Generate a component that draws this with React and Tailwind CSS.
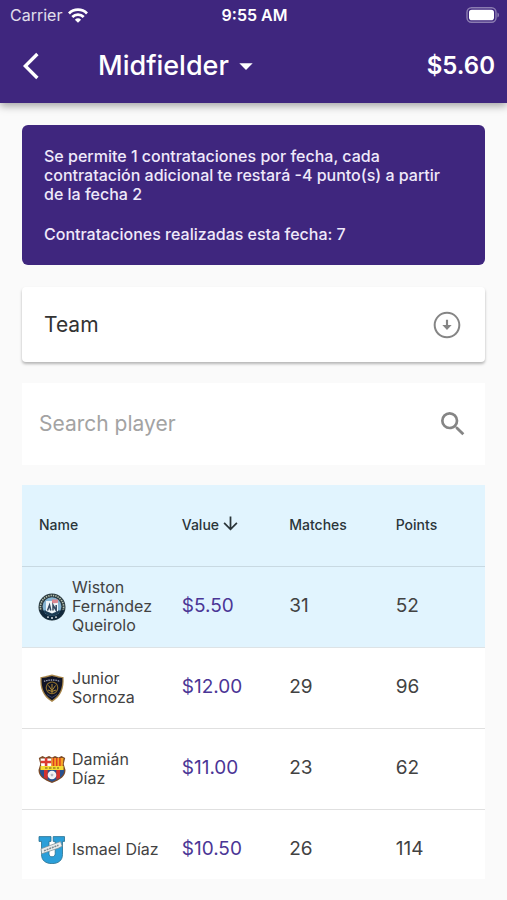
import React from "react";

function MaterialIcon({ d, className }) {
  return (
    <svg viewBox="0 0 24 24" fill="currentColor" aria-hidden="true" className={className}>
      <path d={d} />
    </svg>
  );
}

const ICONS = {
  back: "M11.67 3.87 9.9 2.1 0 12l9.9 9.9 1.77-1.77L3.54 12z",
  caret: "M7 10l5 5 5-5z",
  circleDown:
    "M12 3.500a8.500 8.500 0 1 1 0 17 8.500 8.500 0 0 1 0-17m0-1.500C6.480 2 2 6.480 2 12s4.480 10 10 10 10-4.480 10-10S17.520 2 12 2zm.8 10V8h-1.600v4H8.500l3.500 3.800 3.500-3.800z",
  search:
    "M15.5 14h-.79l-.28-.27A6.47 6.47 0 0 0 16 9.5 6.5 6.5 0 1 0 9.5 16c1.61 0 3.09-.59 4.23-1.57l.27.28v.79l5 4.99L20.49 19l-4.99-5zm-6 0A4.5 4.5 0 1 1 9.5 5a4.5 4.5 0 0 1 0 9z",
  down: "M20 12l-1.41-1.41L13 16.17V4h-2v12.17l-5.58-5.59L4 12l8 8 8-8z",
};

function StatusBar() {
  return (
    <div className="grid h-[30px] grid-cols-3 items-center pr-2 pl-[10px]">
      <div className="flex items-center gap-[6px] text-base text-white/85">
        <span>Carrier</span>
        <svg viewBox="0 0 20 15" className="h-[15px] w-5" fill="none" stroke="#fff" strokeWidth="2.8" aria-hidden="true">
          <path d="M1 5.4a12.8 12.8 0 0 1 18 0" />
          <path d="M4.3 9a8.1 8.1 0 0 1 11.4 0" />
          <path d="M10 14.8 6.9 11.7a4.5 4.5 0 0 1 6.2 0z" fill="#fff" stroke="none" />
        </svg>
      </div>
      <div className="text-center text-base font-semibold">9:55 AM</div>
      <svg viewBox="0 0 33 16" className="h-4 w-[33px] justify-self-end" aria-hidden="true">
        <rect x="1" y="0.75" width="29" height="14.5" rx="4.5" fill="none" stroke="#fff" strokeOpacity=".4" strokeWidth="1.4" />
        <rect x="3" y="2.8" width="25" height="10.4" rx="2.8" fill="#fff" />
        <path d="M31.5 5.5c1 .5 1.4 1.4 1.4 2.5s-.4 2-1.4 2.5z" fill="#fff" fillOpacity=".45" />
      </svg>
    </div>
  );
}

function AppBar() {
  return (
    <header className="relative z-10 shrink-0 bg-[#3f267e] text-white shadow-[0_3px_8px_rgba(0,0,0,0.35)]">
      <StatusBar />
      <div className="flex h-[73px] items-center pr-3 pb-[2px] pl-[23px]">
        <button type="button" aria-label="Back" className="mr-[43px]">
          <MaterialIcon d={ICONS.back} className="size-8" />
        </button>
        <label className="flex items-center gap-px">
          <select aria-label="Position" className="appearance-none bg-transparent text-[27px] leading-9 font-medium outline-none">
            <option>Midfielder</option>
          </select>
          <MaterialIcon d={ICONS.caret} className="size-8 shrink-0" />
        </label>
        <span className="ml-auto text-2xl font-semibold">$5.60</span>
      </div>
    </header>
  );
}

function EmelecCrest() {
  return (
    <svg viewBox="0 0 28 28" className="size-7" aria-hidden="true">
      <circle cx="14" cy="14" r="13.5" fill="#2b3a40" />
      <circle cx="14" cy="14" r="11.6" fill="none" stroke="#b9c1ad" strokeWidth="1.6" strokeDasharray="1.4 1" />
      <path d="M1.4 17a12.9 12.9 0 0 0 25.2 0l-6 .5-6.600 3-6.600-3z" fill="#10283c" />
      <circle cx="14" cy="13.6" r="9.4" fill="#86b4d2" />
      <path d="M5.500 17.500a9.400 9.400 0 0 0 17 0z" fill="#1b3a52" />
      <path d="M8 8h12v10l-6 2.500L8 18z" fill="#eef5f9" />
      <path d="M14 6.500h6v3.200l-6 .8z" fill="#dc8790" />
      <path d="M9.5 17.500 11.500 12l1.300 5.500M15 17.500V12l3.200 5.500V12" fill="none" stroke="#33485f" strokeWidth="1.500" />
      <path d="M9 24.2h2M13 25h2M17 24.2h2" stroke="#d5dce0" strokeWidth="1.3" />
    </svg>
  );
}

function IndependienteCrest() {
  return (
    <svg viewBox="0 0 28 28" className="size-7" aria-hidden="true">
      <path d="M2.500 3C6 2.800 8 1.800 14 .5c6 1.300 8 2.300 11.500 2.500 1 11.500-2.500 19.500-11.500 25C5 22.500 1.500 14.500 2.500 3z" fill="#a8864a" />
      <path d="M3.700 4C7 3.800 9 3 14 1.900c5 1.100 7 1.900 10.300 2.100.6 10-2.300 17.200-10.300 22.300C6 21.200 3.100 14 3.700 4z" fill="#111426" />
      <path d="M6 7.500C10 5.500 18 5.500 22 7.500" fill="none" stroke="#9a9fb2" strokeWidth="1.300" strokeDasharray="1.500 .8" />
      <circle cx="14" cy="13.800" r="5.800" fill="none" stroke="#8a6c2c" strokeWidth="1.200" />
      <path d="M10.500 11.500l3.500 5 3.500-5M14 10v9M10 16l4 1.500 4-1.500" fill="none" stroke="#b28c38" strokeWidth="1" />
      <path d="M9 20.500l5 3 5-3" fill="none" stroke="#39415f" strokeWidth="1" />
    </svg>
  );
}

function BarcelonaCrest() {
  return (
    <svg viewBox="0 0 28 28" className="size-7" aria-hidden="true">
      <path d="M.8 3 4.500 1l3 1.500L11 1l3 1.500L17 1l3.500 1.500 3-1.500 3.700 2-1.500 6 1.800 6c0 6.500-5 9.500-13.500 13C5.500 24.500.5 21.500.5 15l1.800-6z" fill="#7d4a26" />
      <path d="M2.500 3.500h11v7.500H3.200z" fill="#fff" />
      <path d="M2.800 5.800h10.700v2.400H2.800zM6.800 3h2.600v8H6.800z" fill="#dc3a32" />
      <path d="M13.500 3h12l-.8 8H13.500z" fill="#f6a526" />
      <path d="M15.500 3v8M18.700 3v8M21.900 3v8" stroke="#dd3d22" strokeWidth="1.500" />
      <path d="M2.500 11h23v4h-23z" fill="#f5dc35" />
      <path d="M7 13h14" stroke="#9a8125" strokeWidth="1.500" strokeDasharray="2.500 1.500" />
      <path d="M1.800 15h24.400c0 6-4.500 8.500-12.200 11.700C6.300 23.500 1.800 21 1.800 15z" fill="#27508f" />
      <path d="M6 15h3.700v9.600L6 22.800zM18.300 15H22v7.800l-3.700 1.800z" fill="#d3312d" />
      <circle cx="14" cy="20" r="4.300" fill="#f2f2f4" />
      <path d="M14 18.500l1.500 1.100-.6 1.700h-1.800l-.6-1.700z" fill="#b4b7c2" />
    </svg>
  );
}

function CatolicaCrest() {
  return (
    <svg viewBox="0 0 28 28" className="size-7" aria-hidden="true">
      <path
        d="M1 .6h12v4.800h-2v12.100c0 2 1 3.300 3 3.300s3.200-1.300 3.200-3.300V5.400h-2V.6h11.300v4.800h-2v13.100c0 6-4.200 9.100-10.500 9.100S3.500 24.500 3.500 18.500V5.400H1z"
        fill="#2b9fd9"
        stroke="#28708f"
        strokeWidth=".8"
      />
      <path d="M3 12.800 22.500 5.600l1.700 4.600-4 2-16.500 5.600z" fill="#eceeee" stroke="#788990" strokeWidth=".7" />
      <path d="M6 14.800 20.500 9.200" stroke="#7f8c92" strokeWidth="1.500" strokeDasharray="2 .8" />
    </svg>
  );
}

const PLAYERS = [
  { name: "Wiston Fernández Queirolo", Crest: EmelecCrest, value: "$5.50", matches: 31, points: 52, selected: true },
  { name: "Junior Sornoza", Crest: IndependienteCrest, value: "$12.00", matches: 29, points: 96 },
  { name: "Damián Díaz", Crest: BarcelonaCrest, value: "$11.00", matches: 23, points: 62 },
  { name: "Ismael Díaz", Crest: CatolicaCrest, value: "$10.50", matches: 26, points: 114 },
];

function PlayersTable() {
  return (
    <table className="w-full table-fixed border-collapse text-left text-[#424242]">
      <colgroup>
        <col className="w-[34.5%]" />
        <col className="w-[23%]" />
        <col className="w-[23%]" />
        <col />
      </colgroup>
      <thead className="bg-[#e1f4fe] text-sm text-[#2b3539]">
        <tr className="h-[81px] border-b border-[#c8d9e2]">
          <th scope="col" className="pl-[17px] font-medium">Name</th>
          <th scope="col" className="font-medium" aria-sort="descending">
            <button type="button" className="flex items-center gap-px">
              Value
              <MaterialIcon d={ICONS.down} className="mb-1 size-[21px]" />
            </button>
          </th>
          <th scope="col" className="pl-px font-medium">Matches</th>
          <th scope="col" className="pl-px font-medium">Points</th>
        </tr>
      </thead>
      <tbody className="text-[19px]">
        {PLAYERS.map(({ name, Crest, value, matches, points, selected }) => (
          <tr key={name} className={selected ? "h-[81px] border-b border-[#dde3e6] bg-[#e1f4fe]" : "h-[81px] border-b border-[#e0e0e0] bg-white"}>
            <td className="pl-4">
              <div className="flex items-center gap-[6px]">
                <span className="shrink-0"><Crest /></span>
                <span className="w-[90px] text-base leading-[19px]">{name}</span>
              </div>
            </td>
            <td className="text-[#4b3696]">{value}</td>
            <td className="pl-px">{matches}</td>
            <td className="pl-px">{points}</td>
          </tr>
        ))}
      </tbody>
    </table>
  );
}

export default function App() {
  return (
    <div className="flex h-screen flex-col bg-[#fafafa] font-['Inter','Liberation_Sans',sans-serif]">
      <AppBar />
      <main className="flex min-h-0 flex-1 flex-col px-[22px] pt-[22px] pb-[21px]">
        <section className="shrink-0 rounded-md bg-[#3f267e] px-[22px] pt-[22px] pb-[21px] text-base leading-[19px] font-medium text-[#efe9fa]">
          <p>Se permite 1 contrataciones por fecha, cada contratación adicional te restará -4 punto(s) a partir de la fecha 2</p>
          <p className="mt-[21px]">Contrataciones realizadas esta fecha: 7</p>
        </section>

        <label className="mt-[22px] flex h-[75px] shrink-0 items-center rounded bg-white px-[22px] shadow-[0_2px_3px_rgba(0,0,0,0.28)]">
          <select aria-label="Team" className="min-w-0 flex-1 appearance-none bg-transparent text-[21px] text-[#333333] outline-none">
            <option>Team</option>
          </select>
          <MaterialIcon d={ICONS.circleDown} className="size-8 shrink-0 text-[#858585]" />
        </label>

        <label className="mt-[21px] flex h-[82px] shrink-0 items-center bg-white pr-4 pl-[17px]">
          <input
            type="search"
            aria-label="Search player"
            placeholder="Search player"
            className="min-w-0 flex-1 bg-transparent text-[21px] outline-none placeholder:text-[#a3a3a3]"
          />
          <MaterialIcon d={ICONS.search} className="size-8 shrink-0 text-[#858585]" />
        </label>

        <div className="mt-5 min-h-0 flex-1 overflow-hidden">
          <PlayersTable />
        </div>
      </main>
    </div>
  );
}
